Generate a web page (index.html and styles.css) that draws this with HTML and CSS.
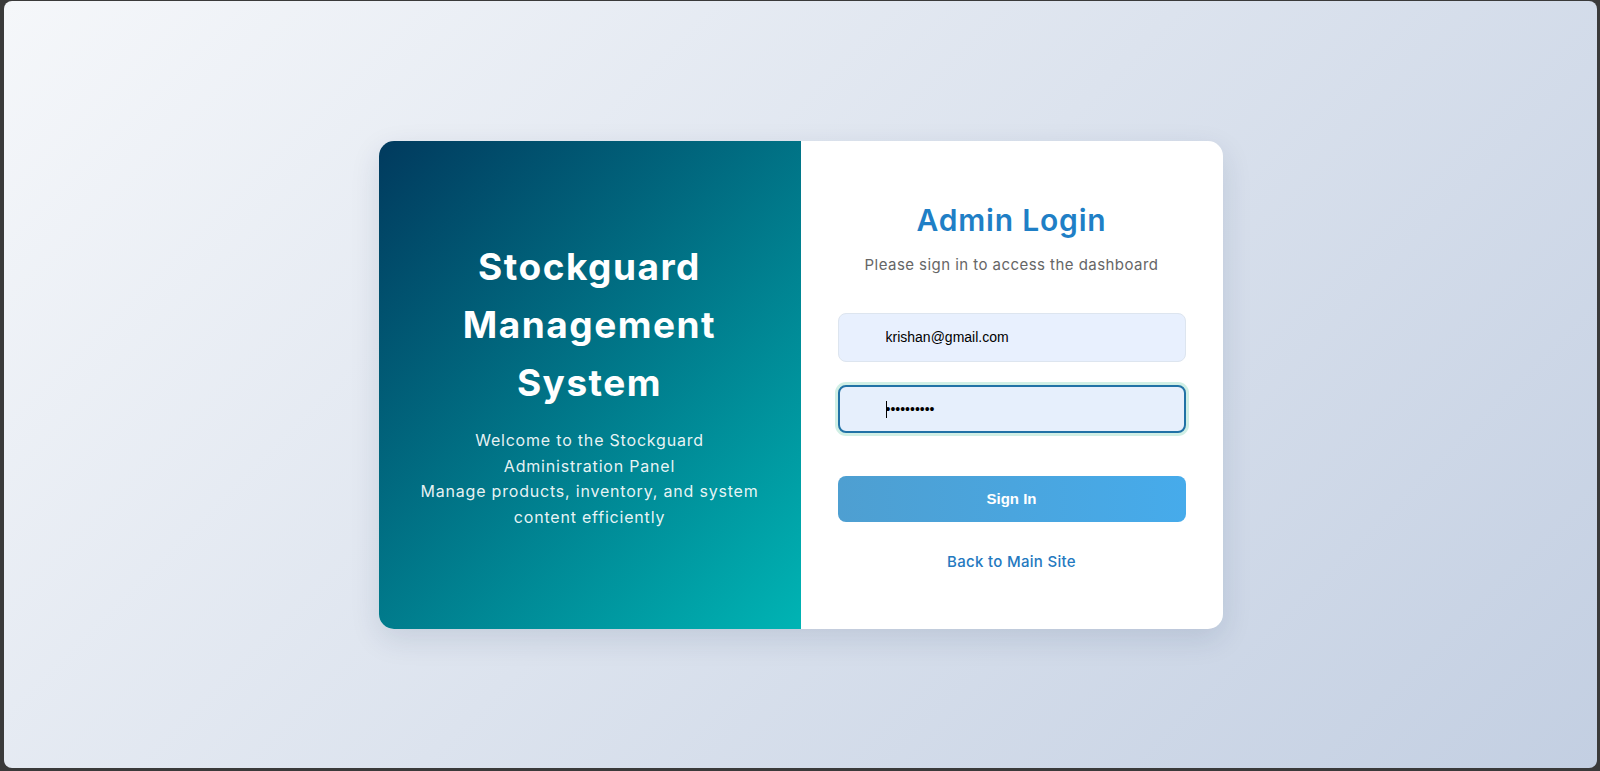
FILE: index.html
```html
<!DOCTYPE html>
<html lang="en">
<head>
<meta charset="utf-8">
<title>Admin Login - Stockguard</title>
<link rel="stylesheet" href="styles.css">
</head>
<body>
<div class="frame">
  <div class="card">
    <section class="brand">
      <h1 class="brand-title">Stockguard Management System</h1>
      <p class="brand-text">Welcome to the Stockguard Administration Panel<br>Manage products, inventory, and system content efficiently</p>
    </section>
    <section class="login">
      <h2 class="login-title">Admin Login</h2>
      <p class="login-sub">Please sign in to access the dashboard</p>
      <form class="login-form">
        <input class="field" type="email" value="krishan@gmail.com">
        <div class="field-wrap">
          <input class="field field-focus" type="password" value="1234567890">
          <span class="caret"></span>
        </div>
        <button class="btn" type="button">Sign In</button>
      </form>
      <a class="back" href="#">Back to Main Site</a>
    </section>
  </div>
</div>
</body>
</html>
```
FILE: styles.css
```css
html, body {
  margin: 0;
  padding: 0;
  height: 100%;
}
body {
  background: #3a3a3a;
  font-family: "Inter", "Open Sans", sans-serif;
  overflow: hidden;
}
.frame {
  box-sizing: border-box;
  margin: 1px 3px 0 4px;
  height: 767px;
  border-radius: 8px;
  background: linear-gradient(135deg, #f5f7fa 0%, #c3cfe2 100%);
  display: flex;
  align-items: center;
  justify-content: center;
}
.card {
  width: 844px;
  min-height: 488px;
  display: grid;
  grid-template-columns: 422px 422px;
  background: #fff;
  border-radius: 15px;
  overflow: hidden;
  box-shadow: 0 10px 30px rgba(20, 40, 80, 0.12);
}
.brand {
  background: linear-gradient(135deg, #013a5e 0%, #00b4b4 100%);
  color: #fff;
  display: flex;
  flex-direction: column;
  justify-content: center;
  align-items: center;
  text-align: center;
  padding: 0 40px;
}
.brand-title {
  margin: 0 0 17px;
  font-size: 37px;
  font-weight: 700;
  line-height: 57.6px;
  letter-spacing: 1.5px;
}
.brand-text {
  margin: 0;
  font-size: 16px;
  line-height: 25.6px;
  letter-spacing: 0.8px;
  color: rgba(255, 255, 255, 0.92);
}
.login {
  display: flex;
  flex-direction: column;
  align-items: center;
  padding: 62px 37px 0;
}
.login-title {
  margin: 0 0 16px;
  font-size: 30px;
  font-weight: 600;
  line-height: 35px;
  letter-spacing: 0.8px;
  color: #1f7fc6;
}
.login-sub {
  margin: 0 0 37px;
  font-size: 15px;
  line-height: 22px;
  letter-spacing: 0.45px;
  color: #666;
}
.login-form {
  width: 100%;
  display: flex;
  flex-direction: column;
}
.field {
  box-sizing: border-box;
  width: 100%;
  height: 49px;
  border: 1px solid #dde5ef;
  border-radius: 8px;
  background: #e8f0fe;
  padding: 0 16px 0 47px;
  font-family: "Liberation Sans", Arial, sans-serif;
  font-size: 14px;
  color: #000;
  outline: none;
}
.field-wrap {
  position: relative;
  margin-top: 23px;
}
.field-focus {
  height: 48px;
  border: 2px solid #2172a6;
  padding-left: 46px;
  box-shadow: 0 0 0 3px rgba(120, 210, 180, 0.35);
  background: #e6effc;
}
.caret {
  position: absolute;
  left: 48px;
  top: 16px;
  width: 1px;
  height: 17px;
  background: #000;
}
.btn {
  margin-top: 43px;
  height: 46px;
  width: 100%;
  border: none;
  border-radius: 8px;
  background: linear-gradient(90deg, #4e9fd1 0%, #46abeb 100%);
  color: #fff;
  font-family: "Liberation Sans", Arial, sans-serif;
  font-size: 15px;
  font-weight: 700;
  cursor: pointer;
}
.back {
  margin-top: 29px;
  font-size: 15px;
  line-height: 22px;
  font-weight: 500;
  letter-spacing: 0.3px;
  color: #2479bf;
  text-decoration: none;
}
```
